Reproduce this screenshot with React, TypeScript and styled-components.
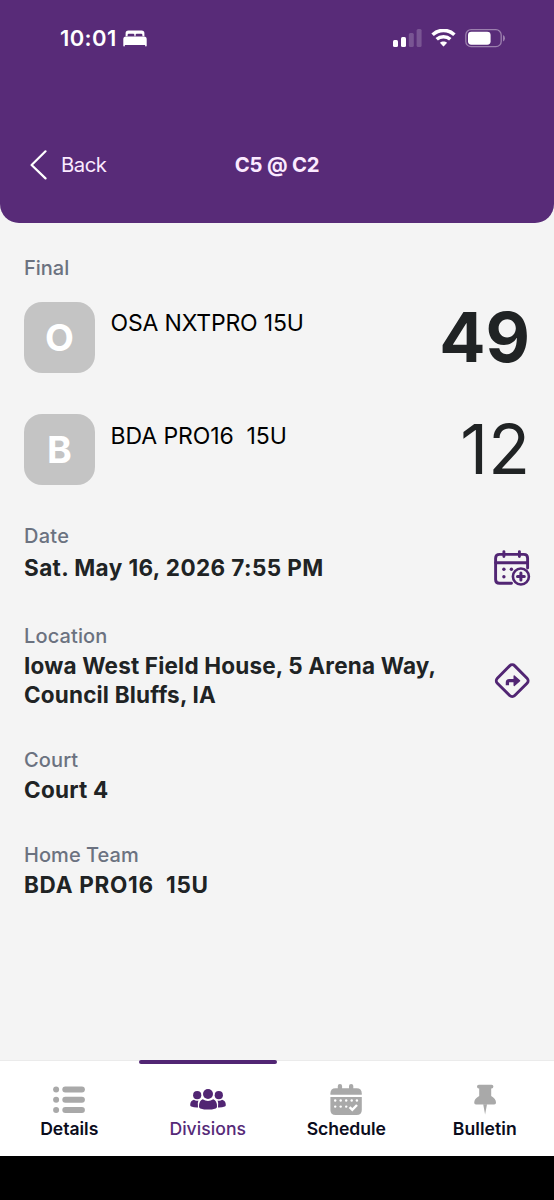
import React from "react";
import styled, { createGlobalStyle } from "styled-components";

const purple = "#582b78";
const accent = "#512573";

const GlobalStyle = createGlobalStyle`
  *, *::before, *::after { box-sizing: border-box; }
  body { margin: 0; background: #000; font-family: Inter, "Liberation Sans", sans-serif; }
`;

const Screen = styled.div`
  display: flex;
  flex-direction: column;
  height: 1200px;
  background: #f4f4f4;
`;

const Header = styled.header`
  height: 223px;
  flex: none;
  background: ${purple};
  border-radius: 0 0 19px 19px;
  color: #fff;
`;

const StatusBar = styled.div`
  display: flex;
  align-items: center;
  justify-content: space-between;
  height: 76px;
  padding: 0 48px 0 60px;
`;

const StatusGroup = styled.div<{ $gap: number }>`
  display: flex;
  align-items: center;
  gap: ${(p) => p.$gap}px;
`;

const Clock = styled.span`
  font-size: 22px;
  font-weight: 600;
  line-height: 26px;
  width: 58px;
  white-space: nowrap;
  letter-spacing: 0.4px;
`;

const NavRow = styled.div`
  display: grid;
  grid-template-columns: 1fr auto 1fr;
  align-items: center;
  height: 32px;
  margin-top: 73px;
  padding: 0 30px;
  color: #fbeaff;
`;

const BackButton = styled.button`
  display: flex;
  align-items: center;
  gap: 13px;
  padding: 0;
  border: 0;
  background: none;
  color: inherit;
  font: 400 20.3px/26px Inter, sans-serif;
  letter-spacing: -0.5px;
`;

const Title = styled.h1`
  margin: 0;
  font-size: 20.3px;
  font-weight: 700;
  line-height: 26px;
  letter-spacing: -0.2px;
`;

const Content = styled.main`
  flex: 1;
  padding: 33px 24px 0;
`;

const Label = styled.div<{ $track?: number; $medium?: boolean }>`
  font-size: 20px;
  line-height: 24px;
  font-weight: ${(p) => (p.$medium ? 500 : 450)};
  color: #6b7280;
  white-space: nowrap;
  letter-spacing: ${(p) => p.$track ?? 0}px;
`;

const Teams = styled.div`
  display: flex;
  flex-direction: column;
  gap: 41.5px;
  margin-top: 21.5px;
`;

const TeamRow = styled.div`
  display: flex;
  height: 71px;
`;

const Avatar = styled.div`
  display: flex;
  align-items: center;
  justify-content: center;
  width: 71px;
  height: 71px;
  border-radius: 18px;
  background: #c4c4c4;
  color: #fff;
  font-size: 37.5px;
  font-weight: 700;
`;

const TeamName = styled.div<{ $track: number }>`
  flex: 1;
  padding: 7.5px 0 0 15.5px;
  color: #000;
  font-size: 23px;
  line-height: 29px;
  white-space: pre;
  letter-spacing: ${(p) => p.$track}px;
`;

const Score = styled.div<{ $winner?: boolean }>`
  color: #202324;
  font-size: 68.5px;
  line-height: 71px;
  font-weight: ${(p) => (p.$winner ? 700 : 400)};
`;

const Details = styled.div`
  display: flex;
  flex-direction: column;
  margin-top: 38.5px;
`;

const Field = styled.section<{ $height: number; $gap: number }>`
  display: flex;
  justify-content: space-between;
  align-items: center;
  height: ${(p) => p.$height}px;

  & > div {
    display: flex;
    flex-direction: column;
    gap: ${(p) => p.$gap}px;
    align-self: flex-start;
  }
`;

const Value = styled.div<{ $track: number }>`
  color: #202324;
  font-size: 22.5px;
  line-height: 29.5px;
  font-weight: 700;
  white-space: pre;
  letter-spacing: ${(p) => p.$track}px;
`;

const IconButton = styled.button<{ $top: number }>`
  align-self: flex-start;
  margin: ${(p) => p.$top}px -1px 0 0;
  padding: 0;
  border: 0;
  background: none;
  color: ${accent};
  width: 38px;
  height: 38px;

  svg { display: block; }
`;

const TabBar = styled.nav`
  display: grid;
  grid-template-columns: repeat(4, 1fr);
  height: 96px;
  flex: none;
  background: #fff;
  border-top: 1px solid #ebebeb;
`;

const Tab = styled.a<{ $active?: boolean }>`
  display: flex;
  flex-direction: column;
  align-items: center;
  color: ${(p) => (p.$active ? accent : "#a9a9a9")};

  &::before {
    content: "";
    width: 100%;
    height: 4px;
    margin-top: -1px;
    border-radius: 2px;
    background: ${(p) => (p.$active ? accent : "transparent")};
  }

  svg { display: block; margin-top: 18px; }
`;

const TabLabel = styled.span<{ $active?: boolean; $track: number }>`
  font-size: 17.6px;
  line-height: 22px;
  font-weight: ${(p) => (p.$active ? 500 : 600)};
  color: ${(p) => (p.$active ? "#562a78" : "#0b0c1c")};
  letter-spacing: ${(p) => p.$track}px;
`;

const HomeArea = styled.div`
  height: 44px;
  flex: none;
  background: #000;
`;

const BedIcon = () => (
  <svg width="24" height="17" viewBox="0 0 24 17" fill="currentColor">
    <path d="M2.6 6.2V3.2Q2.6 .4 5.4 .4H18.6Q21.4 .4 21.4 3.2V6.2H19.4V5Q19.4 3.8 18.2 3.8H13.8Q12.6 3.8 12.6 5V6.2H11.4V5Q11.4 3.8 10.2 3.8H5.8Q4.6 3.8 4.6 5V6.2Z" />
    <path d="M3 6.6H21Q23.7 6.6 23.7 9.3V15.6Q23.7 16.6 22.9 16.6Q22.1 16.6 22.1 15.6V14.9H1.9V15.6Q1.9 16.6 1.1 16.6Q.3 16.6 .3 15.6V9.3Q.3 6.6 3 6.6Z" />
  </svg>
);

const SignalIcon = () => (
  <svg width="29" height="18" viewBox="0 0 29 18" fill="currentColor">
    <rect x="0" y="11" width="5" height="7" rx="1.5" />
    <rect x="8" y="8" width="5" height="10" rx="1.5" />
    <rect x="15.8" y="4" width="5" height="14" rx="1.5" opacity=".2" />
    <rect x="23.6" y="0" width="5" height="18" rx="1.5" opacity=".2" />
  </svg>
);

const WifiIcon = () => (
  <svg width="25" height="18" viewBox="0 0 25 18" fill="none">
    <path d="M1.6 5.7C7.7 0 17.3 0 23.4 5.7" stroke="currentColor" strokeWidth="3.6" />
    <path d="M5.7 10.3C9.5 6.8 15.5 6.8 19.3 10.3" stroke="currentColor" strokeWidth="3.5" />
    <path d="M8.9 13.8C10.9 11.9 14.1 11.9 16.1 13.8L13.1 17.1Q12.5 17.7 11.9 17.1Z" fill="currentColor" />
  </svg>
);

const BatteryIcon = () => (
  <svg width="41" height="19" viewBox="0 0 41 19" fill="none">
    <rect x=".8" y=".7" width="35.4" height="17" rx="5.3" stroke="#9c80ae" strokeWidth="1.3" />
    <rect x="3" y="2.7" width="22.6" height="13" rx="3.4" fill="#fff" />
    <path d="M38 6Q40 7 40 9.2T38 12.4Z" fill="#9c80ae" />
  </svg>
);

const ChevronIcon = () => (
  <svg width="18" height="30" viewBox="0 0 18 30" fill="none" stroke="#fff" strokeWidth="2.2" strokeLinecap="round" strokeLinejoin="round">
    <path d="M15.5 1.3 1.6 15 15.5 28.4" />
  </svg>
);

const CalendarAddIcon = () => (
  <svg width="38" height="38" viewBox="0 0 38 38" fill="none" stroke="currentColor" strokeWidth="2.9" strokeLinecap="round">
    <path d="M18.5 34.3H6.5Q2.6 34.3 2.6 30.4V9.2Q2.6 5.4 6.5 5.4H30.8Q34.6 5.4 34.6 9.2V19" />
    <path d="M2.6 13.8H34.6M10.9 2.6V7.6M26.4 2.6V7.6" />
    <g fill="currentColor" stroke="none">
      <circle cx="10.9" cy="20.2" r="1.7" />
      <circle cx="18.4" cy="20.2" r="1.7" />
      <circle cx="10.9" cy="27.7" r="1.7" />
    </g>
    <circle cx="27.9" cy="27.5" r="8" strokeWidth="2.6" />
    <path d="M27.9 24.1V30.9M24.5 27.5H31.3" strokeWidth="3" />
  </svg>
);

const DirectionsIcon = () => (
  <svg width="38" height="38" viewBox="0 0 38 38" fill="none" stroke="currentColor" strokeWidth="2.9">
    <rect x="6.9" y="6.4" width="24.6" height="24.6" rx="3.6" transform="rotate(45 19.2 18.7)" />
    <path d="M14.4 23.2V20.6Q14.4 18.7 16.3 18.7H21.5" strokeWidth="3.3" />
    <path d="M21.2 14 26.6 18.7 21.2 23.4Z" fill="currentColor" strokeWidth="1.4" strokeLinejoin="round" />
  </svg>
);

const ListIcon = () => (
  <svg width="34" height="36" viewBox="0 0 34 36" fill="currentColor">
    {[7.6, 17.8, 28.1].map((y) => (
      <g key={y}>
        <circle cx="4.1" cy={y} r="3" />
        <rect x="10.3" y={y - 3} width="22.6" height="6" rx="3" />
      </g>
    ))}
  </svg>
);

const GroupIcon = () => (
  <svg width="38" height="36" viewBox="0 0 38 36" fill="currentColor">
    <circle cx="8.2" cy="13.2" r="4.1" />
    <circle cx="29.8" cy="13.2" r="4.1" />
    <circle cx="19" cy="12" r="5" />
    <path d="M4.9 17.7Q6.8 19.2 9.4 18.5Q8.2 21 9 25.4Q5.3 25.6 2.2 24.5Q1.2 24.2 1.2 23Q1.2 18.6 4.9 17.7Z" />
    <path d="M33.1 17.7Q31.2 19.2 28.6 18.5Q29.8 21 29 25.4Q32.7 25.6 35.8 24.5Q36.8 24.2 36.8 23Q36.8 18.6 33.1 17.7Z" />
    <path d="M13.7 17.3Q19 20.7 24.3 17.3Q28 18.6 28 24.5Q28 25.9 26.7 26.4Q19 28.8 11.3 26.4Q10 25.9 10 24.5Q10 18.6 13.7 17.3Z" />
  </svg>
);

const ScheduleIcon = () => (
  <svg width="34" height="36" viewBox="0 0 34 36" fill="currentColor">
    <rect x="8.8" y="2" width="4.3" height="8" rx="2.1" />
    <rect x="20" y="2" width="4.3" height="8" rx="2.1" />
    <path d="M1.4 12.8V11.4Q1.4 6.2 6.6 6.2H27.6Q32.8 6.2 32.8 11.4V12.8Z" />
    <path d="M1.4 14.9H32.8V28Q32.8 33 27.6 33H6.6Q1.4 33 1.4 28Z" />
    <g fill="#fff">
      {[6.2, 11.7, 17.2, 22.7, 27.9].map((x) => <circle key={x} cx={x} cy="18.5" r="1.2" />)}
      {[6.2, 11.7, 17.2].map((x) => <circle key={x} cx={x} cy="24.6" r="1.2" />)}
    </g>
    <path d="M20.6 25.2 23.3 27.8 28 23" fill="none" stroke="#fff" strokeWidth="2.5" />
  </svg>
);

const PinIcon = () => (
  <svg width="34" height="36" viewBox="0 0 34 36" fill="currentColor">
    <path d="M10.8 2.8H23.6Q25.4 2.8 25.4 4.6T23.6 6.6H23.2V13.9Q28 16.5 28 20.7Q28 22.5 26.2 22.5H8Q6.2 22.5 6.2 20.7Q6.2 16.5 11.2 13.9V6.6H10.8Q9 6.4 9 4.6T10.8 2.8Z" />
    <path d="M15.2 22.3H19L17.1 32.6Z" />
  </svg>
);

const tabs = [
  { name: "Details", icon: <ListIcon />, track: -0.05 },
  { name: "Divisions", icon: <GroupIcon />, track: 0.05 },
  { name: "Schedule", icon: <ScheduleIcon />, track: -0.08 },
  { name: "Bulletin", icon: <PinIcon />, track: 0.05 },
];

export default function App() {
  const current = "Divisions";
  return (
    <>
      <GlobalStyle />
      <Screen>
        <Header>
          <StatusBar>
            <StatusGroup $gap={5}>
              <Clock>10:01</Clock>
              <BedIcon />
            </StatusGroup>
            <StatusGroup $gap={9}>
              <SignalIcon />
              <WifiIcon />
              <BatteryIcon />
            </StatusGroup>
          </StatusBar>
          <NavRow>
            <BackButton><ChevronIcon />Back</BackButton>
            <Title>C5 @ C2</Title>
          </NavRow>
        </Header>

        <Content>
          <Label $medium>Final</Label>
          <Teams>
            <TeamRow>
              <Avatar>O</Avatar>
              <TeamName $track={-0.17}>OSA NXTPRO 15U</TeamName>
              <Score $winner>49</Score>
            </TeamRow>
            <TeamRow>
              <Avatar>B</Avatar>
              <TeamName $track={-0.08}>{"BDA PRO16  15U"}</TeamName>
              <Score>12</Score>
            </TeamRow>
          </Teams>

          <Details>
            <Field $height={100} $gap={5.5}>
              <div>
                <Label $track={0.25}>Date</Label>
                <Value $track={0.41}>Sat. May 16, 2026 7:55 PM</Value>
              </div>
              <IconButton $top={25} aria-label="Add to calendar"><CalendarAddIcon /></IconButton>
            </Field>
            <Field $height={124.5} $gap={3}>
              <div>
                <Label $track={0.12}>Location</Label>
                <Value $track={0.18}>{"Iowa West Field House, 5 Arena Way,\nCouncil Bluffs, IA"}</Value>
              </div>
              <IconButton $top={38} aria-label="Directions"><DirectionsIcon /></IconButton>
            </Field>
            <Field $height={94.5} $gap={3}>
              <div>
                <Label $track={0.12}>Court</Label>
                <Value $track={0.25}>Court 4</Value>
              </div>
            </Field>
            <Field $height={60} $gap={3}>
              <div>
                <Label $track={0.05}>Home Team</Label>
                <Value $track={0.73}>{"BDA PRO16  15U"}</Value>
              </div>
            </Field>
          </Details>
        </Content>

        <TabBar>
          {tabs.map((t) => (
            <Tab key={t.name} $active={t.name === current}>
              {t.icon}
              <TabLabel $active={t.name === current} $track={t.track}>{t.name}</TabLabel>
            </Tab>
          ))}
        </TabBar>
        <HomeArea />
      </Screen>
    </>
  );
}
